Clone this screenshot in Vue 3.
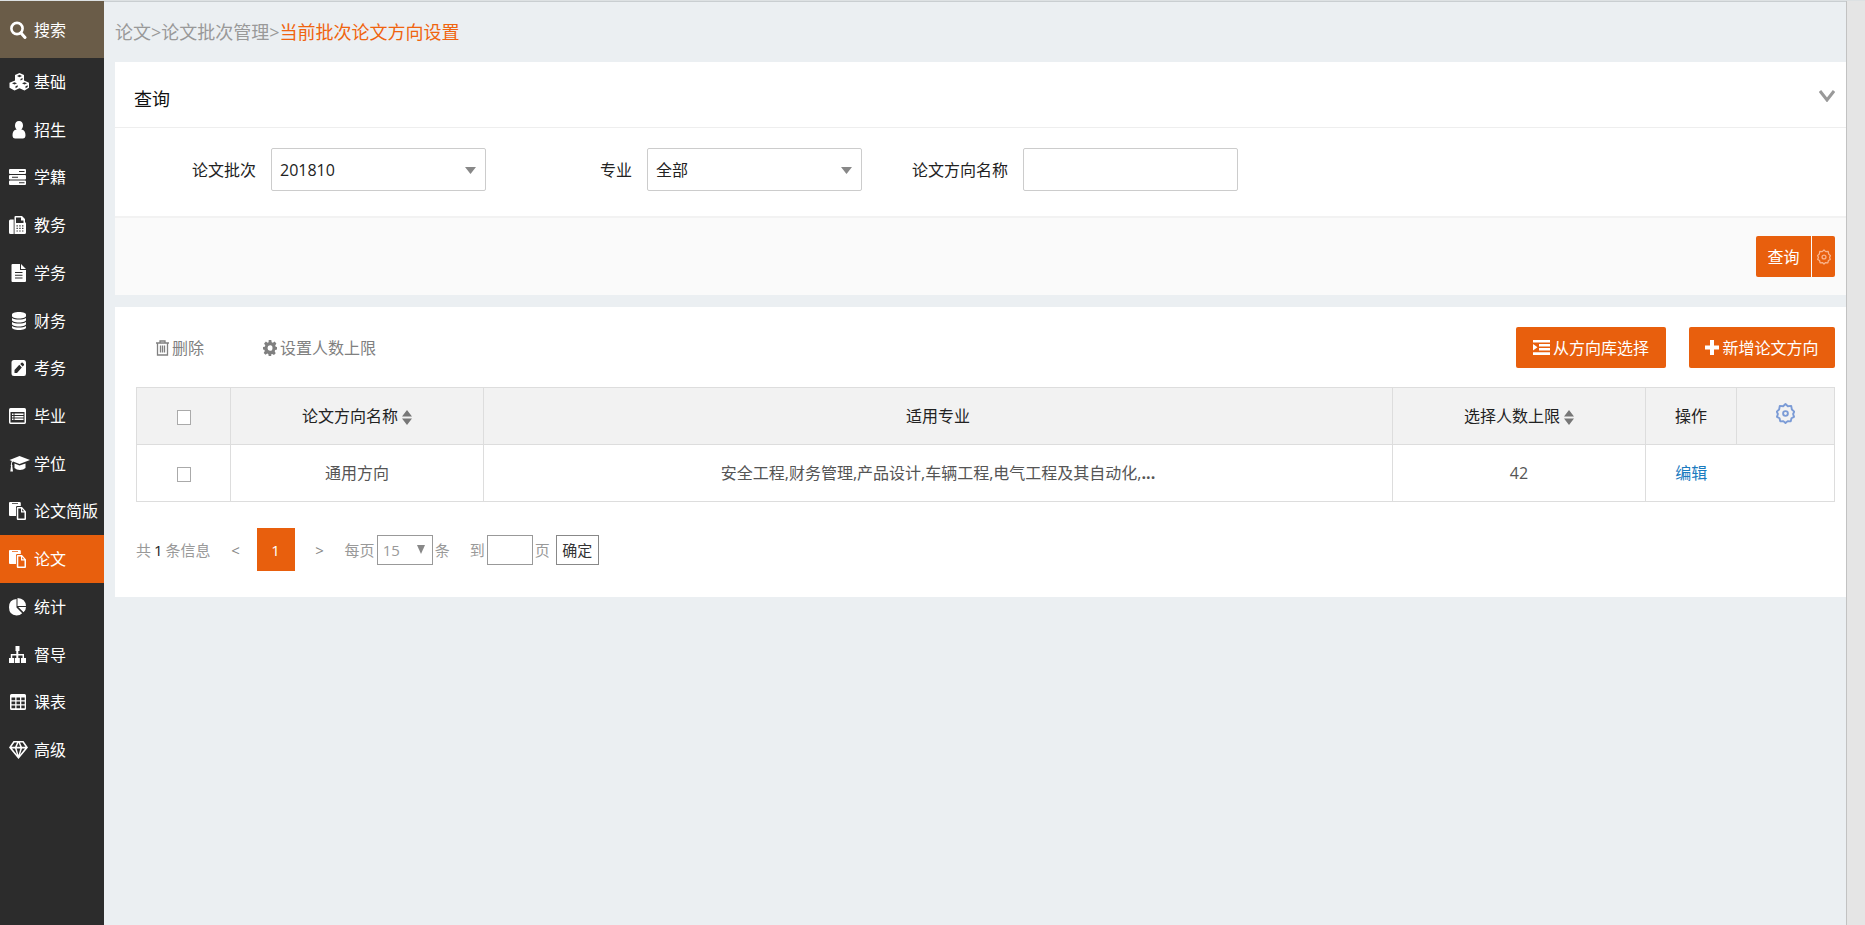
<script setup>
import { ref } from 'vue'

const menu = [
  { label: '基础', icon: 'cubes' },
  { label: '招生', icon: 'user' },
  { label: '学籍', icon: 'server' },
  { label: '教务', icon: 'fax' },
  { label: '学务', icon: 'file' },
  { label: '财务', icon: 'database' },
  { label: '考务', icon: 'edit' },
  { label: '毕业', icon: 'list' },
  { label: '学位', icon: 'cap' },
  { label: '论文简版', icon: 'paste' },
  { label: '论文', icon: 'paste', active: true },
  { label: '统计', icon: 'pie' },
  { label: '督导', icon: 'sitemap' },
  { label: '课表', icon: 'table' },
  { label: '高级', icon: 'gem' }
]

// Shapes are drawn on a 21 x 18 grid, holes use the even-odd rule.
const icons = {
  cubes:
    'M10.500 0 15 2v5.500l5 2.200v5L15.500 17.500 10.500 15.200 5.500 17.500.5 14.700V9.700L6 7.500V2zM10.500 1.800 8 3l2.500 1.200L13 3zM11.500 7.500 13.600 6.500V5l-2.100 1zM5.500 9.200 3 10.300l2.500 1.200L8 10.300zM6.500 15.200 8.700 14v-1.700l-2.200 1zM15.500 9.200 13 10.300l2.500 1.200L18 10.300zM16.500 15.200 18.700 14v-1.700l-2.200 1z',
  user:
    'M10 0c2.600 0 4 2 4 4.500 0 1.700-.7 3.200-1.700 4 2.900.2 4.200 2.300 4.200 5.700 0 2-1 3.300-2.700 3.300H6.200c-1.700 0-2.700-1.300-2.700-3.300 0-3.400 1.300-5.500 4.200-5.700C6.700 7.700 6 6.200 6 4.500 6 2 7.400 0 10 0z',
  server:
    'M1 1h15q1 0 1 1v3q0 1-1 1H1Q0 6 0 5V2Q0 1 1 1zM1 7h15q1 0 1 1v2.500q0 1-1 1H1q-1 0-1-1V8q0-1 1-1zM1 12.500h15q1 0 1 1V16q0 1-1 1H1q-1 0-1-1v-2.500q0-1 1-1zM10 3v1h5.500V3zM3 8.800v1h6v-1zM10 14.300v1h5.500v-1z',
  fax:
    'M1.500 3.500H4.700V18H1.500Q0 18 0 16.500V5Q0 3.500 1.500 3.500zM6.500 0H13l3 3v3.200q1 .4 1 1.500v8.800q0 1.500-1.500 1.500H5.500V1q0-1 1-1zM7 1.500V7h7.500V4.500H12v-3zM7.500 9.200v1.200h1.300V9.200zM10.300 9.200v1.200h1.300V9.200zM13.100 9.200v1.200h1.300V9.200zM7.500 11.800V13h1.300v-1.200zM10.300 11.800V13h1.300v-1.200zM13.100 11.800V13h1.300v-1.200zM7.500 14.400v1.200h1.300v-1.200zM10.300 14.400v1.200h1.300v-1.200zM13.100 14.400v1.200h1.300v-1.200z',
  file:
    'M3.500 0H11v6h6v11q0 1-1 1H3.500q-1 0-1-1V1q0-1 1-1zM12 0l5 5h-5zM6 8v1h7.500V8zM6 10.700v1h7.500v-1zM6 13.400v1h7.500v-1z',
  database:
    'M10 0c4.500 0 7 1.200 7 2.500V4c0 1.300-2.500 2.500-7 2.500S3 5.300 3 4V2.500C3 1.200 5.500 0 10 0zM3 6c3 2 11 2 14 0v2c0 1.300-2.500 2.500-7 2.500S3 9.300 3 8zM3 10c3 2 11 2 14 0v2c0 1.300-2.500 2.500-7 2.500S3 13.300 3 12zM3 14c3 2 11 2 14 0v1.500c0 1.300-2.500 2.500-7 2.500s-7-1.200-7-2.500z',
  edit:
    'M5 1h10q2 0 2 2.500v11q0 2.500-2 2.500H5q-2.500 0-2.500-2.500v-11Q2.500 1 5 1zM5.500 11v3H8l4.800-5.400-2.500-2.800zM11.200 4.900l2.500 2.700 1.200-1.400q.4-.6 0-1.200l-1.200-1.300q-.6-.5-1.200 0z',
  list:
    'M1.500 1h14Q17 1 17 2.700v12.600q0 1.700-1.500 1.700h-14Q0 17 0 15.300V2.700Q0 1 1.500 1zM1.500 5v10.500h14V5zM3 6.500h1.500V8H3zM5.500 6.500h9V8h-9zM3 9h1.500v1.500H3zM5.500 9h9v1.500h-9zM3 11.500h1.500V13H3zM5.500 11.500h9V13h-9z',
  cap:
    'M10.500 1 21 5 10.500 9 4 6.500Q2.800 7.500 2.800 9.500q1 .7.500 1.800L4 16.500H1.300L2 11.300Q1.300 10.200 2 9.500 2 7.500 2.800 6L.5 5zM5.500 8.500l5 2 6-2v4.500q-2 2-5.500 2t-5.500-2z',
  paste:
    'M1 0h9.500q1.300 0 1.300 1v3H8.200Q7 4 7 5.200V14H1q-1 0-1-1V1q0-1 1-1zM3 1.200V2h6V1.200zM8.800 5h4.200l4 4.500V17q0 1-1 1H8.800q-1 0-1-1V6q0-1 1-1zM9.300 6.500v10h6.200v-6H12v-4zM13.200 7v2.200h1.900z',
  pie:
    'M7.500 1v8.500l5.700 5.700Q11 17.500 7.500 17.500 0 17 0 9.200 0 1.500 7.500 1zM8.500 0q8 .5 8.500 8H8.500zM9.300 9H17q0 3.300-2.500 5.300z',
  sitemap:
    'M6.500 0h4v5H9.300v3H15v4h2v5h-5v-5h1.500V9.500H9.300V12h1.500v5h-5v-5h1.500V9.500H3.300V12H5v5H0v-5h1.800V8h5.500V5H6.500z',
  table:
    'M2.500 1h13Q17 1 17 2.500v13q0 1.500-1.500 1.500h-13Q1 17 1 15.500v-13Q1 1 2.500 1zM2.500 4.500v2.700h3.700V4.500zM7.500 4.500v2.700h3.500V4.500zM12.300 4.500v2.700h3.400V4.500zM2.500 8.500v2.700h3.700V8.500zM7.500 8.500v2.700h3.500V8.500zM12.300 8.500v2.700h3.400V8.500zM2.500 12.500v2.700h3.700v-2.700zM7.500 12.500v2.700h3.500v-2.700zM12.300 12.500v2.700h3.400v-2.700z',
  gem:
    'M4.500 0h10L19 6.500 9.500 18 0 6.500zM5.400 1.500 2.500 5.800h3.600l1.900-4.300zM9.500 1.800 7.800 5.800h3.400zM11 1.500l1.900 4.300h3.600l-2.900-4.300zM3 7.500l5 6.300-2-6.300zM7.600 7.500 9.500 14l1.900-6.500zM13 7.500l-2 6.300 5-6.300z'
}

const batch = ref('201810')
const major = ref('全部')
const topic = ref('')
const pageSize = ref('15')
const target = ref('')

const rows = [
  { name: '通用方向', majors: '安全工程,财务管理,产品设计,车辆工程,电气工程及其自动化,', limit: 42 }
]
</script>

<template>
  <div class="page">
    <nav class="side">
      <button type="button" class="search">
        <svg class="ico" viewBox="0 0 21 18"><circle cx="8" cy="7.500" r="5.600" fill="none" stroke="currentColor" stroke-width="2.600" /><path d="m12 12 4 4.500" stroke="currentColor" stroke-width="3" stroke-linecap="round" /></svg>搜索
      </button>
      <div class="menu">
        <a v-for="m in menu" :key="m.label" href="#" :class="{ active: m.active }">
          <svg class="ico" viewBox="0 0 21 18"><path :d="icons[m.icon]" fill="currentColor" fill-rule="evenodd" /></svg>{{ m.label }}
        </a>
      </div>
    </nav>

    <main class="main">
      <div class="crumbs"><a href="#">论文</a>&gt;<a href="#">论文批次管理</a>&gt;<span class="here">当前批次论文方向设置</span></div>

      <section class="panel">
        <header class="head">
          <h2>查询</h2>
          <button type="button" class="fold" aria-label="收起">
            <svg width="16" height="12" viewBox="0 0 16 12"><path d="m1 1 7 9 7-9" fill="none" stroke="#999" stroke-width="3" /></svg>
          </button>
        </header>
        <div class="fields">
          <div class="field">
            <label for="batch">论文批次</label>
            <div class="pick">
              <select id="batch" v-model="batch"><option>201810</option></select>
              <svg width="11" height="7" viewBox="0 0 11 7"><path d="M0 0h11L5.500 7z" fill="#888" /></svg>
            </div>
          </div>
          <div class="field">
            <label for="major">专业</label>
            <div class="pick">
              <select id="major" v-model="major"><option>全部</option></select>
              <svg width="11" height="7" viewBox="0 0 11 7"><path d="M0 0h11L5.500 7z" fill="#888" /></svg>
            </div>
          </div>
          <div class="field">
            <label for="topic">论文方向名称</label>
            <input id="topic" v-model="topic" type="text" />
          </div>
        </div>
        <footer class="foot">
          <button type="button" class="btn query">查询</button>
          <button type="button" class="btn gear" aria-label="设置">
            <svg width="14" height="16" viewBox="0 0 20 22"><path d="M10 1 12.500 3.300 16 3 16.700 6.800 19.200 9 18 11.500 19 14.500 16.300 16 15.500 19.300 12.300 19 10 21 7.700 19 4.500 19.300 3.700 16 1 14.500 2 11.500.8 9 3.300 6.800 4 3 7.500 3.300z" fill="none" stroke="currentColor" stroke-width="1.800" stroke-linejoin="round" /><circle cx="10" cy="11" r="2.800" fill="none" stroke="currentColor" stroke-width="1.800" /></svg>
          </button>
        </footer>
      </section>

      <section class="panel list">
        <div class="tools">
          <button type="button" class="plain">
            <svg width="13" height="16" viewBox="0 0 13 16"><path d="M0 3h13M4 3V1h5v2M1.500 3v12h10V3M4.500 5.500v7M6.500 5.500v7M8.500 5.500v7" fill="none" stroke="currentColor" stroke-width="1.300" /></svg>删除
          </button>
          <button type="button" class="plain limit">
            <svg width="14" height="16" viewBox="0 0 14 16"><path d="M5.700 0h2.600l.4 2.200 1.200.6 1.700-1.300 1.800 2-1.200 2 .5 1.300L14 7v2.500l-1.800.4-.5 1.300 1 2-1.700 1.900-1.800-1.200-1.100.5L8.300 16H5.700l-.4-1.900-1.100-.5-1.700 1.200L.700 12.900l1.100-1.800-.5-1.300L0 9.500V7l1.800-.3.500-1.300-1.200-2 1.800-1.900 1.700 1.300 1-.6zM7 5.200Q4.500 5.500 4.500 8T7 10.800 9.500 8 7 5.200z" fill="currentColor" fill-rule="evenodd" /></svg>设置人数上限
          </button>
          <button type="button" class="btn wide pool">
            <svg width="17" height="15" viewBox="0 0 17 15"><path d="M0 0h17v2.500H0zM6 4h11v2.500H6zM6 8h11v2.500H6zM0 12.200h17V15H0zM0 4l4.500 3.300L0 10.500z" fill="currentColor" /></svg>从方向库选择
          </button>
          <button type="button" class="btn wide">
            <svg width="14" height="15" viewBox="0 0 14 15"><path d="M5 0h4v5.500h5v4H9V15H5V9.500H0v-4h5z" fill="currentColor" /></svg>新增论文方向
          </button>
        </div>

        <table>
          <colgroup>
            <col class="c-check" /><col class="c-mid" /><col /><col class="c-mid" /><col class="c-op" /><col class="c-set" />
          </colgroup>
          <thead>
            <tr>
              <th><input type="checkbox" aria-label="全选" /></th>
              <th>论文方向名称<svg class="sort" viewBox="0 0 10 15"><path d="M5 0l5 6.500H0zM0 8.500h10L5 15z" fill="#777" /></svg></th>
              <th>适用专业</th>
              <th>选择人数上限<svg class="sort" viewBox="0 0 10 15"><path d="M5 0l5 6.500H0zM0 8.500h10L5 15z" fill="#777" /></svg></th>
              <th>操作</th>
              <th>
                <button type="button" class="setup" aria-label="列设置">
                  <svg width="19" height="21" viewBox="0 0 20 22"><path d="M10 1 12.500 3.300 16 3 16.700 6.800 19.200 9 18 11.500 19 14.500 16.300 16 15.500 19.300 12.300 19 10 21 7.700 19 4.500 19.300 3.700 16 1 14.500 2 11.500.8 9 3.300 6.800 4 3 7.500 3.300z" fill="none" stroke="currentColor" stroke-width="2" stroke-linejoin="round" /><circle cx="10" cy="11" r="2.500" fill="none" stroke="currentColor" stroke-width="2" /></svg>
                </button>
              </th>
            </tr>
          </thead>
          <tbody>
            <tr v-for="r in rows" :key="r.name">
              <td><input type="checkbox" :aria-label="r.name" /></td>
              <td>{{ r.name }}</td>
              <td>{{ r.majors }}<b>...</b></td>
              <td>{{ r.limit }}</td>
              <td class="op"><a href="#">编辑</a></td>
              <td class="rest"></td>
            </tr>
          </tbody>
        </table>

        <div class="pager">
          <span class="total">共<b>1</b>条信息</span>
          <button type="button" class="step" aria-label="上一页">&lt;</button>
          <button type="button" class="current">1</button>
          <button type="button" class="step" aria-label="下一页">&gt;</button>
          <label for="size" class="per">每页</label>
          <div class="pick small">
            <select id="size" v-model="pageSize"><option>15</option></select>
            <svg width="8" height="9" viewBox="0 0 8 9"><path d="M0 0h8L4 9z" fill="#888" /></svg>
          </div>
          <span>条</span>
          <label for="target" class="to">到</label>
          <input id="target" v-model="target" type="text" class="jump" />
          <span>页</span>
          <button type="button" class="ok">确定</button>
        </div>
      </section>
    </main>
    <div class="gutter"></div>
  </div>
</template>

<style>
body {
  margin: 0;
  background: #ebeff2;
}
</style>

<style scoped>
.page {
  display: flex;
  min-height: 100vh;
  box-sizing: border-box;
  border-top: 1px solid #dde1e3;
  font: 16px/24px "Open Sans", "Noto Sans CJK SC", sans-serif;
  color: #222;
}
.page * {
  box-sizing: border-box;
}
button,
input,
select {
  font: inherit;
  color: inherit;
  margin: 0;
  padding: 0;
}
button {
  border: 0;
  background: none;
  cursor: pointer;
}
a {
  text-decoration: none;
  color: inherit;
}
svg {
  flex: none;
}

.side {
  flex: none;
  width: 104px;
  background: #2c2c2c;
  color: #fff;
}
.search,
.menu a {
  display: flex;
  align-items: center;
  gap: 4px;
  padding-left: 9px;
  white-space: nowrap;
}
.search {
  width: 100%;
  height: 57px;
  background: #6a5c48;
}
.menu {
  display: grid;
  grid-auto-rows: 1fr;
  height: 716px;
}
.menu .active {
  background: #e85f0d;
}
.ico {
  width: 21px;
  height: 18px;
}

.main {
  flex: 1;
  min-width: 0;
  padding-left: 11px;
  border-top: 1px solid #c9ced1;
  background: #ebeff2;
}
.gutter {
  flex: none;
  width: 19px;
  border-left: 1px solid #c2c2c2;
  background: #e5e5e5;
}
.crumbs {
  height: 60px;
  font-size: 18px;
  line-height: 60px;
  color: #999;
}
.here {
  color: #f0640f;
}

.panel {
  background: #fff;
}
.head {
  display: flex;
  align-items: center;
  justify-content: space-between;
  height: 66px;
  padding: 8px 11px 0 19px;
  border-bottom: 1px solid #eee;
}
.head h2 {
  margin: 0;
  font-size: 18px;
  font-weight: 400;
  color: #111;
}
.fold {
  display: flex;
  padding-bottom: 5px;
}
.fields {
  display: grid;
  grid-template-columns: repeat(3, 371px);
  column-gap: 5px;
  padding: 20px 0 25px;
}
.field {
  display: flex;
  justify-content: flex-end;
  align-items: center;
  gap: 15px;
}
.pick {
  position: relative;
  width: 215px;
}
.pick svg {
  position: absolute;
  right: 10px;
  top: 19px;
  pointer-events: none;
}
.pick select,
.field input {
  display: block;
  width: 215px;
  height: 43px;
  padding: 0 8px;
  border: 1px solid #ccc;
  border-radius: 2px;
  background: #fff;
  appearance: none;
}
.foot {
  display: flex;
  justify-content: flex-end;
  gap: 1px;
  height: 79px;
  padding: 18px 11px 0 0;
  border-top: 2px solid #f2f2f2;
  background: #fafafa;
}
.btn {
  display: flex;
  align-items: center;
  justify-content: center;
  gap: 3px;
  height: 41px;
  border-radius: 2px;
  background: #e85f0d;
  color: #fff;
}
.query {
  width: 55px;
  border-radius: 2px 0 0 2px;
}
.gear {
  width: 23px;
  border-radius: 0 2px 2px 0;
  color: #f9b48c;
}

.list {
  margin-top: 12px;
  padding: 20px 11px 26px 21px;
}
.tools {
  display: flex;
  align-items: center;
}
.plain {
  display: flex;
  align-items: center;
  gap: 3px;
  color: #808080;
}
.plain:first-child {
  margin-left: 20px;
}
.limit {
  margin-left: 59px;
}
.wide {
  width: 146px;
}
.pool {
  width: 150px;
  margin: 0 23px 0 auto;
}

table {
  width: 100%;
  margin: 19px 0 26px;
  border-collapse: collapse;
  table-layout: fixed;
  text-align: center;
}
.c-check {
  width: 94px;
}
.c-mid {
  width: 253px;
}
.c-op {
  width: 91px;
}
.c-set {
  width: 98px;
}
th,
td {
  height: 57px;
  padding: 0;
  border: 1px solid #ddd;
  font-weight: 400;
}
th {
  background: #f2f2f2;
}
td {
  color: #555;
}
td.op {
  border-right: 0;
}
td.rest {
  border-left: 0;
}
.op a {
  color: #1a7bbf;
}
.sort {
  width: 10px;
  height: 15px;
  margin-left: 4px;
  vertical-align: -3px;
}
.setup {
  color: #7b9bd6;
}
.setup svg {
  display: block;
}
input[type="checkbox"] {
  appearance: none;
  width: 14px;
  height: 15px;
  border: 1px solid #aaa;
  background: #fff;
  vertical-align: -3px;
}

.pager {
  display: flex;
  align-items: center;
  gap: 2px;
  font-size: 15px;
  color: #999;
}
.total b {
  margin: 0 3px;
  font-weight: 400;
  color: #222;
}
.step {
  width: 38px;
  color: #888;
}
.total + .step {
  margin-left: 4px;
}
.current {
  width: 38px;
  height: 43px;
  margin-right: 4px;
  background: #e85f0d;
  color: #fff;
}
.per {
  margin-left: 4px;
}
.pick.small {
  width: 56px;
}
.pick.small svg {
  top: 10px;
  right: 8px;
}
.pick.small select {
  width: 56px;
  height: 30px;
  padding: 0 5px;
  border-color: #999;
  border-radius: 0;
}
.to {
  margin-left: 18px;
}
.jump {
  width: 46px;
  height: 30px;
  border: 1px solid #999;
}
.ok {
  width: 43px;
  height: 30px;
  margin-left: 4px;
  border: 1px solid #888;
  color: #333;
}
</style>
